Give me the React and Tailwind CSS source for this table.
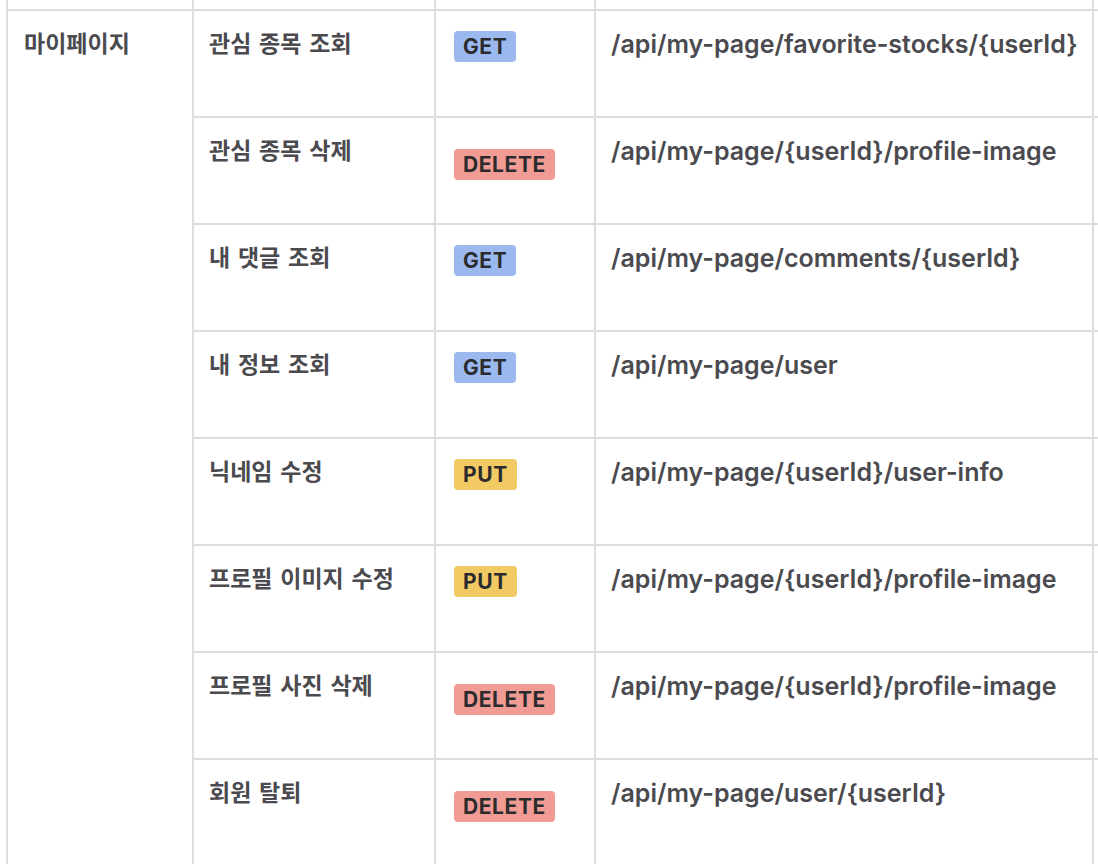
import React from "react";

const rows = [
  ["관심 종목 조회", "GET", "/api/my-page/favorite-stocks/{userId}"],
  ["관심 종목 삭제", "DELETE", "/api/my-page/{userId}/profile-image"],
  ["내 댓글 조회", "GET", "/api/my-page/comments/{userId}"],
  ["내 정보 조회", "GET", "/api/my-page/user"],
  ["닉네임 수정", "PUT", "/api/my-page/{userId}/user-info"],
  ["프로필 이미지 수정", "PUT", "/api/my-page/{userId}/profile-image"],
  ["프로필 사진 삭제", "DELETE", "/api/my-page/{userId}/profile-image"],
  ["회원 탈퇴", "DELETE", "/api/my-page/user/{userId}"],
];

function Badge({ m }) {
  const cls =
    m === "GET"
      ? "bg-[#9cb9ef] mt-[4px]"
      : m === "PUT"
      ? "bg-[#f2ca63] mt-[4px]"
      : "bg-[#f09b94] mt-[15px]";
  return (
    <span
      className={`inline-block rounded-[4px] px-[9px] h-[31px] leading-[31px] text-[21px] font-bold tracking-[0.6px] text-[#2b2b2e] ${cls}`}
    >
      {m}
    </span>
  );
}

export default function App() {
  return (
    <div
      className="h-[864px] w-[1098px] overflow-hidden bg-white"
      style={{ fontFamily: '"Inter", "Noto Sans CJK KR", sans-serif' }}
    >
      <div className="ml-[6px] pl-[2px] bg-[#dddde1] grid gap-[2px] grid-cols-[184px_240px_158px_496px_1fr] grid-rows-[9px_repeat(8,105px)]">
        <div className="bg-white" />
        <div className="bg-white" />
        <div className="bg-white" />
        <div className="bg-white" />
        <div className="bg-white" />
        <div className="bg-white row-span-8 px-[16px] pt-[17px] text-[23px] leading-[32px] font-semibold text-[#4a4a4f]">
          마이페이지
        </div>
        {rows.map(([name, m, path], i) => (
          <React.Fragment key={i}>
            <div className="bg-white px-[15px] pt-[17px] text-[23px] leading-[32px] font-semibold text-[#4a4a4f] [word-spacing:2px] whitespace-nowrap">
              {name}
            </div>
            <div className="bg-white pl-[18px] pt-[16px]">
              <Badge m={m} />
            </div>
            <div className="bg-white px-[15px] pt-[17px] text-[25px] leading-[32px] font-semibold text-[#4a4a4f] whitespace-nowrap">
              {path}
            </div>
            <div className="bg-white" />
          </React.Fragment>
        ))}
      </div>
    </div>
  );
}
